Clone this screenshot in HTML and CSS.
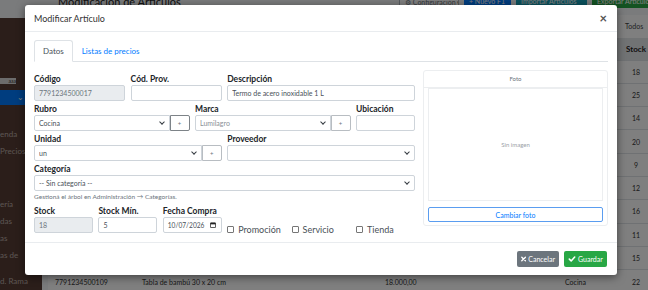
FILE: index.html
```html
<!DOCTYPE html>
<html lang="es">
  <head>
    <meta charset="UTF-8" />
    <meta name="viewport" content="width=device-width, initial-scale=1.0" />
    <title>Modificar Artículo</title>
    <link rel="stylesheet" href="styles.css">
  </head>
  <body>
    <div class="app">
      <aside class="sidebar">
        <div class="sidebar__brand"></div>
        <div class="sidebar__user"><span class="sidebar__badge">aaa</span></div>
        <div class="sidebar__active"><span class="sidebar__caret">&#8964;</span></div>
        <nav class="sidebar__nav">
          <div class="sidebar__item sidebar__item_first">enda</div>
          <div class="sidebar__item">Precios</div>
          <div class="sidebar__item sidebar__item_gap">ería</div>
          <div class="sidebar__item">das</div>
          <div class="sidebar__item">as</div>
          <div class="sidebar__item">as de</div>
          <div class="sidebar__item sidebar__item_last">d. Rama</div>
        </nav>
      </aside>
      <main class="content">
        <div class="content__header">
          <h1 class="content__title">Modificación de Artículos</h1>
          <div class="actions">
            <span class="btn-bg btn-bg_outline">&#9881; Configuración &#9662;</span>
            <span class="btn-bg btn-bg_blue">+ Nuevo F1</span>
            <span class="btn-bg btn-bg_teal">Importar Artículos</span>
            <span class="btn-bg btn-bg_green">Exportar Artículos</span>
          </div>
        </div>
        <div class="list">
          <div class="list__filter">Todos</div>
          <table class="table">
            <thead>
              <tr><th class="c1">Código</th><th class="c2">Descripción</th><th class="c3">Precio</th><th class="c4">Rubro</th><th class="c5">Stock</th><th class="c6"></th></tr>
            </thead>
            <tbody>
              <tr><td>7791234500010</td><td>Termo de acero inoxidable 1 L</td><td>25.000,00</td><td>Cocina</td><td>18</td><td></td></tr>
              <tr><td>7791234500011</td><td>Mate de calabaza</td><td>9.500,00</td><td>Cocina</td><td>25</td><td></td></tr>
              <tr><td>7791234500012</td><td>Bombilla de acero</td><td>4.200,00</td><td>Cocina</td><td>14</td><td></td></tr>
              <tr><td>7791234500013</td><td>Jarra de vidrio</td><td>12.000,00</td><td>Cocina</td><td>20</td><td></td></tr>
              <tr><td>7791234500014</td><td>Sartén antiadherente</td><td>31.000,00</td><td>Cocina</td><td>9</td><td></td></tr>
              <tr><td>7791234500015</td><td>Set de cuchillos</td><td>22.500,00</td><td>Cocina</td><td>12</td><td></td></tr>
              <tr><td>7791234500016</td><td>Tupper hermético</td><td>6.800,00</td><td>Cocina</td><td>16</td><td></td></tr>
              <tr><td>7791234500017</td><td>Colador de acero</td><td>5.300,00</td><td>Cocina</td><td>11</td><td></td></tr>
              <tr><td>7791234500018</td><td>Cucharón de madera</td><td>3.900,00</td><td>Cocina</td><td>15</td><td></td></tr>
              <tr><td>7791234500109</td><td>Tabla de bambú 30 x 20 cm</td><td>18.000,00</td><td>Cocina</td><td>22</td><td></td></tr>
            </tbody>
          </table>
        </div>
      </main>
    </div>

    <div class="backdrop"></div>

    <div class="modal">
      <div class="modal__header">
        <h2 class="modal__title">Modificar Artículo</h2>
        <span class="modal__close">&times;</span>
      </div>
      <div class="modal__body">
        <div class="tabs">
          <span class="tabs__item tabs__item_active">Datos</span>
          <span class="tabs__item">Listas de precios</span>
        </div>
        <div class="tab-content">
          <div class="form">
            <div class="field span-3">
              <label class="field__label">Código</label>
              <input class="control control_disabled" value="7791234500017" disabled>
            </div>
            <div class="field span-3">
              <label class="field__label">Cód. Prov.</label>
              <input class="control" value="">
            </div>
            <div class="field span-6">
              <label class="field__label">Descripción</label>
              <input class="control" value="Termo de acero inoxidable 1 L">
            </div>

            <div class="field span-5">
              <label class="field__label">Rubro</label>
              <div class="group">
                <div class="select"><select class="control control_select"><option>Cocina</option></select></div>
                <button class="group__btn group__btn_focus">+</button>
              </div>
            </div>
            <div class="field span-5">
              <label class="field__label">Marca</label>
              <div class="group">
                <div class="select"><select class="control control_select control_muted"><option>Lumilagro</option></select></div>
                <button class="group__btn">+</button>
              </div>
            </div>
            <div class="field span-2">
              <label class="field__label">Ubicación</label>
              <input class="control" value="">
            </div>

            <div class="field span-6">
              <label class="field__label">Unidad</label>
              <div class="group">
                <div class="select"><select class="control control_select"><option>un</option></select></div>
                <button class="group__btn">+</button>
              </div>
            </div>
            <div class="field span-6">
              <label class="field__label">Proveedor</label>
              <div class="select"><select class="control control_select"><option></option></select></div>
            </div>

            <div class="field span-12 field_help">
              <label class="field__label">Categoría</label>
              <div class="select"><select class="control control_select"><option>-- Sin categoría --</option></select></div>
              <small class="field__help">Gestioná el árbol en Administración → Categorías.</small>
            </div>

            <div class="field span-2">
              <label class="field__label">Stock</label>
              <input class="control control_disabled" value="18" disabled>
            </div>
            <div class="field span-2">
              <label class="field__label">Stock Mín.</label>
              <input class="control" value="5">
            </div>
            <div class="field span-2">
              <label class="field__label">Fecha Compra</label>
              <div class="control control_date">
                <span>10/07/2026</span>
                <svg width="6" height="6" viewBox="0 0 14 14"><rect x="1" y="2" width="12" height="11" rx="1" fill="none" stroke="#222" stroke-width="1.8"/><rect x="1" y="2" width="12" height="3.5" fill="#222"/></svg>
              </div>
            </div>
            <label class="check span-2"><span class="check__box"></span>Promoción</label>
            <label class="check span-2"><span class="check__box"></span>Servicio</label>
            <label class="check span-2"><span class="check__box"></span>Tienda</label>
          </div>

          <div class="photo">
            <div class="photo__header">Foto</div>
            <div class="photo__body">
              <div class="photo__image">Sin imagen</div>
              <button class="photo__btn">Cambiar foto</button>
            </div>
          </div>
        </div>
      </div>
      <div class="modal__footer">
        <button class="btn btn_secondary">
          <svg width="6" height="6" viewBox="0 0 10 10"><path d="M1.5 1.5 L8.5 8.5 M8.5 1.5 L1.5 8.5" stroke="#fff" stroke-width="2.6" stroke-linecap="round"/></svg>Cancelar
        </button>
        <button class="btn btn_success">
          <svg width="8" height="6" viewBox="0 0 12 10"><path d="M1.5 5.2 L4.6 8.2 L10.5 1.8" fill="none" stroke="#fff" stroke-width="2.6" stroke-linecap="round" stroke-linejoin="round"/></svg>Guardar
        </button>
      </div>
    </div>
  </body>
</html>
```

FILE: styles.css
```css
:root {
  --text-color: #212529;
  --input-color: #495057;
  --muted-color: #6c757d;
  --border-color: #ced4da;
  --light-border: #e9ecef;
  --blue-color: #007bff;
  --green-color: #28a745;
  --teal-color: #17a2b8;
  --sidebar-color: #573d35;
}

* {
  box-sizing: border-box;
  margin: 0;
  padding: 0;
}
body {
  width: 648px;
  height: 290px;
  overflow: hidden;
  font-family: Lato, "Liberation Sans", sans-serif;
  color: var(--text-color);
  background-color: #f4f6f9;
}

/* page behind the modal */
.app {
  width: 700px;
  height: 290px;
  display: flex;
}
.sidebar {
  width: 42px;
  flex-shrink: 0;
  background-color: var(--sidebar-color);
  color: #b9aca5;
  font-size: 8px;
  display: flex;
  flex-direction: column;
}
.sidebar__brand {
  height: 20px;
  background-color: #f4f6f9;
}
.sidebar__user {
  padding-top: 58px;
  height: 74px;
}
.sidebar__badge {
  display: inline-block;
  width: 16px;
  height: 6px;
  background-color: #d8d8d8;
  color: #333;
  font-size: 5px;
  line-height: 6px;
  overflow: hidden;
  text-align: right;
}
.sidebar__active {
  height: 17px;
  background-color: var(--blue-color);
  display: flex;
  align-items: center;
  justify-content: flex-end;
  padding-right: 18px;
  color: #fff;
  font-size: 8px;
}
.sidebar__nav {
  display: flex;
  flex-direction: column;
}
.sidebar__item {
  line-height: 17px;
  white-space: nowrap;
}
.sidebar__item_first {
  margin-top: 21px;
}
.sidebar__item_gap {
  margin-top: 36px;
}
.sidebar__item_last {
  margin-top: 9px;
}
.content {
  flex: 1;
  padding: 0 8px 0 6px;
  font-size: 8px;
}
.content__header {
  display: flex;
  align-items: center;
  height: 16px;
  margin-top: -7px;
}
.content__title {
  font-size: 11px;
  font-weight: 400;
  margin-left: 10px;
  color: #222;
}
.actions {
  margin-left: auto;
  display: flex;
  gap: 5px;
  margin-right: 25px;
}
.btn-bg {
  height: 14px;
  padding: 0 5px;
  border-radius: 2px;
  color: #fff;
  font-size: 7px;
  line-height: 14px;
  white-space: nowrap;
  overflow: hidden;
}
.btn-bg_outline {
  color: var(--muted-color);
  border: 1px solid #adb5bd;
  background-color: #fff;
  width: 60px;
}
.btn-bg_blue {
  background-color: var(--blue-color);
  width: 47px;
}
.btn-bg_teal {
  background-color: var(--teal-color);
  width: 71px;
}
.btn-bg_green {
  background-color: var(--green-color);
  width: 75px;
}
.list {
  margin-top: 6px;
  background-color: #fff;
}
.list__filter {
  height: 23px;
  line-height: 23px;
  padding-left: 577px;
  color: #444;
  font-size: 7px;
}
.table {
  border-collapse: collapse;
  table-layout: fixed;
  width: 644px;
  font-size: 7px;
  color: #333;
}
.table th {
  background-color: #e3e6e9;
  height: 22px;
  text-align: left;
  font-weight: 700;
  padding: 0 7px;
  color: #222;
  font-size: 8px;
}
.table td {
  height: 23.3px;
  padding: 0 7px;
  border-top: 1px solid #dee2e6;
  white-space: nowrap;
}
.table .c5,
.table td:nth-child(5) {
  text-align: center;
  padding: 0;
}
.c1 { width: 87px; }
.c2 { width: 243px; }
.c3 { width: 180px; }
.c4 { width: 60px; }
.c5 { width: 36px; }
.c6 { width: 38px; }

.backdrop {
  position: absolute;
  inset: 0;
  background-color: rgba(0, 0, 0, 0.5);
}

/* modal */
.modal {
  position: absolute;
  left: 25px;
  top: 5px;
  width: 592px;
  height: 270px;
  background-color: #fff;
  border-radius: 3px;
  box-shadow: 0 2px 8px rgba(0, 0, 0, 0.5);
  display: flex;
  flex-direction: column;
}
.modal__header {
  height: 27px;
  padding: 0 10px 0 9px;
  display: flex;
  align-items: center;
  justify-content: space-between;
  border-bottom: 1px solid var(--light-border);
}
.modal__title {
  font-size: 9px;
  font-weight: 400;
  color: #333;
}
.modal__close {
  font-size: 13px;
  font-weight: 700;
  color: #555;
  line-height: 1;
}
.modal__body {
  flex: 1;
  padding: 8px 9px 0;
}
.tabs {
  display: flex;
  height: 22px;
  border-bottom: 1px solid #dee2e6;
}
.tabs__item {
  padding: 0 8px;
  line-height: 21px;
  font-size: 8px;
  color: var(--blue-color);
  border: 1px solid transparent;
}
.tabs__item_active {
  color: var(--input-color);
  border-color: #dee2e6 #dee2e6 #fff;
  border-radius: 3px 3px 0 0;
  height: 22px;
}
.tab-content {
  display: grid;
  grid-template-columns: 381px 185px;
  gap: 8px;
  margin-top: 8px;
}

.form {
  padding-top: 4px;
  display: grid;
  grid-template-columns: repeat(12, 1fr);
  column-gap: 5.4px;
  align-content: start;
}
.span-2 { grid-column: span 2; }
.span-3 { grid-column: span 3; }
.span-5 { grid-column: span 5; }
.span-6 { grid-column: span 6; }
.span-12 { grid-column: span 12; }
.field {
  margin-bottom: 3px;
  min-width: 0;
}
.field_help {
  margin-bottom: 4px;
}
.field__label {
  display: block;
  font-size: 8.5px;
  font-weight: 700;
  line-height: 11px;
  color: var(--text-color);
}
.field__help {
  display: block;
  margin-top: 1px;
  font-size: 6.5px;
  line-height: 10px;
  color: var(--muted-color);
}
.control {
  display: block;
  width: 100%;
  height: 16px;
  padding: 0 4px;
  border: 1px solid var(--border-color);
  border-radius: 2px;
  font-family: inherit;
  font-size: 7px;
  color: var(--input-color);
  background-color: #fff;
  outline: none;
}
.control_disabled {
  background-color: var(--light-border);
  color: var(--muted-color);
}
.control_select {
  appearance: none;
  padding-right: 12px;
}
.control_muted {
  color: #8a9096;
}
.control_date {
  display: flex;
  align-items: center;
  justify-content: space-between;
  padding-right: 5px;
  font-size: 6.6px;
}
.select {
  position: relative;
  flex: 1;
  min-width: 0;
}
.select::after {
  content: "";
  position: absolute;
  right: 6px;
  top: 5px;
  width: 3px;
  height: 3px;
  border-right: 1px solid #343a40;
  border-bottom: 1px solid #343a40;
  transform: rotate(45deg);
}
.group {
  display: flex;
}
.group .control {
  border-radius: 2px 0 0 2px;
}
.group__btn {
  width: 20px;
  height: 16px;
  flex-shrink: 0;
  border: 1px solid #b8bdc2;
  border-radius: 0 2px 2px 0;
  background-color: #fff;
  color: var(--muted-color);
  font-size: 6px;
  font-family: inherit;
}
.group__btn_focus {
  border-color: #7d8388;
}
.check {
  display: flex;
  align-items: center;
  gap: 4px;
  padding-top: 17px;
  height: 30px;
  font-size: 9px;
  color: var(--input-color);
}
.check__box {
  width: 7px;
  height: 7px;
  flex-shrink: 0;
  border: 1px solid #767676;
  border-radius: 1px;
}

.photo {
  height: 156px;
  border: 1px solid #eceef0;
  border-radius: 3px;
  display: flex;
  flex-direction: column;
}
.photo__header {
  height: 17px;
  line-height: 16px;
  text-align: center;
  font-size: 6px;
  color: var(--muted-color);
  border-bottom: 1px solid #eceef0;
}
.photo__body {
  padding: 0 4px 3px;
}
.photo__image {
  height: 113px;
  border: 1px solid #eceef0;
  display: flex;
  align-items: center;
  justify-content: center;
  font-size: 6px;
  color: #9aa0a6;
}
.photo__btn {
  display: block;
  width: 100%;
  height: 15px;
  margin-top: 6px;
  border: 1px solid #5a9df0;
  border-radius: 2px;
  background-color: #fff;
  color: var(--blue-color);
  font-family: inherit;
  font-size: 7px;
}

.modal__footer {
  height: 33px;
  border-top: 1px solid var(--light-border);
  display: flex;
  align-items: center;
  justify-content: flex-end;
  gap: 5px;
  padding-right: 10px;
}
.btn {
  height: 16px;
  padding: 0 4px;
  border: none;
  border-radius: 2px;
  color: #fff;
  font-family: inherit;
  font-size: 7px;
  display: flex;
  align-items: center;
  gap: 2px;
}
.btn_secondary {
  background-color: var(--muted-color);
  width: 42px;
}
.btn_success {
  background-color: var(--green-color);
  width: 43px;
}
```
